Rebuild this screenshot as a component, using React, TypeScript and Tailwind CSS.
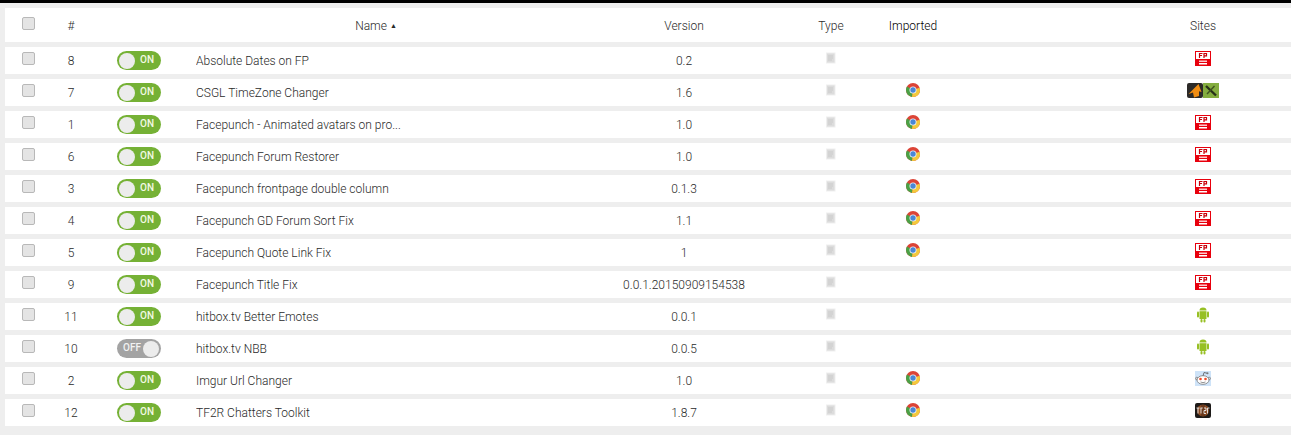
const gridCols = 'grid grid-cols-[46px_40px_105px_364px_248px_46px_118px_143px_176px] items-center';

type Site = 'fp' | 'csgl' | 'android' | 'reddit' | 'tf2r';

interface Script {
  id: number;
  enabled: boolean;
  name: string;
  version: string;
  imported: boolean;
  site: Site;
}

const scripts: Script[] = [
  { id: 8, enabled: true, name: 'Absolute Dates on FP', version: '0.2', imported: false, site: 'fp' },
  { id: 7, enabled: true, name: 'CSGL TimeZone Changer', version: '1.6', imported: true, site: 'csgl' },
  { id: 1, enabled: true, name: 'Facepunch - Animated avatars on pro...', version: '1.0', imported: true, site: 'fp' },
  { id: 6, enabled: true, name: 'Facepunch Forum Restorer', version: '1.0', imported: true, site: 'fp' },
  { id: 3, enabled: true, name: 'Facepunch frontpage double column', version: '0.1.3', imported: true, site: 'fp' },
  { id: 4, enabled: true, name: 'Facepunch GD Forum Sort Fix', version: '1.1', imported: true, site: 'fp' },
  { id: 5, enabled: true, name: 'Facepunch Quote Link Fix', version: '1', imported: true, site: 'fp' },
  { id: 9, enabled: true, name: 'Facepunch Title Fix', version: '0.0.1.20150909154538', imported: false, site: 'fp' },
  { id: 11, enabled: true, name: 'hitbox.tv Better Emotes', version: '0.0.1', imported: false, site: 'android' },
  { id: 10, enabled: false, name: 'hitbox.tv NBB', version: '0.0.5', imported: false, site: 'android' },
  { id: 2, enabled: true, name: 'Imgur Url Changer', version: '1.0', imported: true, site: 'reddit' },
  { id: 12, enabled: true, name: 'TF2R Chatters Toolkit', version: '1.8.7', imported: true, site: 'tf2r' },
];

function Checkbox() {
  return <div className="mx-auto -mt-[4px] h-[13px] w-[13px] rounded-[2px] border border-[#b8b8b8] bg-[#e4e4e4]" />;
}

function Toggle({ on }: { on: boolean }) {
  if (on) {
    return (
      <div className="ml-[26px] flex h-[19px] w-11 items-center justify-between rounded-full bg-[#75b135] pl-[2px] pr-[7px]">
        <div className="h-[16px] w-[16px] rounded-full bg-[#ececec]" />
        <span className="-mt-[1px] text-[10px] font-medium text-[#f4f9e6]">ON</span>
      </div>
    );
  }
  return (
    <div className="ml-[26px] flex h-[19px] w-11 items-center justify-between rounded-full bg-[#a3a3a3] pl-[6px] pr-[2px]">
      <span className="-mt-[1px] text-[10px] font-medium text-[#f2f2f2]">OFF</span>
      <div className="h-[16px] w-[16px] rounded-full bg-[#ececec]" />
    </div>
  );
}

function TypeIcon() {
  return (
    <svg width="12" height="13" viewBox="0 0 12 13" className="mx-auto -mt-[4px] block blur-[0.5px]">
      <rect x="1" y="0.500" width="9.500" height="11" fill="#efefef" />
      <rect x="2" y="1.500" width="7.500" height="9" fill="#dcdcdc" />
      <path d="M3 4h5M3 6h5M3 8h4" stroke="#cacaca" strokeWidth="1" />
    </svg>
  );
}

function ChromeIcon() {
  return (
    <svg width="14" height="14" viewBox="0 0 14 14" className="mx-auto -mt-[5px] block">
      <circle cx="7" cy="7" r="7" fill="#dc4437" />
      <path d="M7 7 1 3.400A7 7 0 0 0 6 13.900Z" fill="#4aa146" />
      <path d="M7 7 13.600 4.700A7 7 0 0 1 6 13.900Z" fill="#f4c93c" />
      <circle cx="7" cy="7" r="3.500" fill="#eef1f4" />
      <circle cx="7" cy="7" r="2.700" fill="#4a87d6" />
    </svg>
  );
}

function FpIcon() {
  return (
    <svg width="16" height="15" viewBox="0 0 16 15" className="block">
      <rect width="16" height="15" fill="#e8000d" />
      <rect x="1" y="1" width="14" height="7" fill="#fff" />
      <path d="M4.500 7V2.500h3M4.500 4.500h2.500M9 7V2.500h2.500v2.300H9" fill="none" stroke="#c8000a" strokeWidth="1.200" />
      <rect x="4" y="9.500" width="8" height="1.500" fill="#ffc9cc" />
      <rect x="4" y="12" width="8" height="1.500" fill="#fff" />
    </svg>
  );
}

function CsglIcon() {
  return (
    <div className="flex">
      <svg width="16" height="15" viewBox="0 0 16 15" className="block">
        <rect width="16" height="15" rx="2" fill="#2c2a28" />
        <path d="M11.500 1 14.500 9l-2.500-.8V13l-5 1.500-1-5L1.500 11Z" fill="#f18d12" />
      </svg>
      <svg width="16" height="15" viewBox="0 0 16 15" className="block">
        <rect width="16" height="15" fill="#84ad3f" />
        <path d="M3 3 13 12.500" stroke="#263018" strokeWidth="2.400" />
        <path d="M11.500 3 4 11" stroke="#3f5320" strokeWidth="1.400" />
      </svg>
    </div>
  );
}

function AndroidIcon() {
  return (
    <svg width="12" height="16" viewBox="0 0 12 16" className="block">
      <path d="M2.500 3.500a3.500 3 0 0 1 7 0Z" fill="#97c024" />
      <rect x="2.500" y="4.200" width="7" height="7.800" fill="#97c024" />
      <rect x="0" y="4.500" width="2" height="6" rx="1" fill="#97c024" />
      <rect x="10" y="4.500" width="2" height="6" rx="1" fill="#97c024" />
      <rect x="3.500" y="12" width="2" height="3.500" rx="1" fill="#97c024" />
      <rect x="6.500" y="12" width="2" height="3.500" rx="1" fill="#97c024" />
    </svg>
  );
}

function RedditIcon() {
  return (
    <svg width="16" height="15" viewBox="0 0 16 15" className="block">
      <rect width="16" height="15" fill="#cee3f8" />
      <path d="M8 5 9 1.500l3 .7" fill="none" stroke="#555" strokeWidth="0.800" />
      <circle cx="12.500" cy="2.200" r="1" fill="#777" />
      <circle cx="1.800" cy="7.500" r="1.300" fill="#ddd" stroke="#666" strokeWidth="0.600" />
      <circle cx="14.200" cy="7.500" r="1.300" fill="#ddd" stroke="#666" strokeWidth="0.600" />
      <ellipse cx="8" cy="9" rx="6" ry="4.300" fill="#fff" stroke="#666" strokeWidth="0.700" />
      <circle cx="5.500" cy="8" r="1.300" fill="#f04b2a" />
      <circle cx="10.500" cy="8" r="1.300" fill="#f04b2a" />
      <path d="M5.500 11q2.500 1.300 5 0" fill="none" stroke="#666" strokeWidth="0.700" />
    </svg>
  );
}

function Tf2rIcon() {
  return (
    <svg width="16" height="15" viewBox="0 0 16 15" className="block">
      <rect width="16" height="15" rx="2" fill="#1d1a18" />
      <ellipse cx="8" cy="7.500" rx="6" ry="6" fill="#8a4a22" />
      <path d="M7 2v11M9 2v11" stroke="#3a2013" strokeWidth="0.800" />
      <path d="M1.500 5h3M3 5v5.500M5.500 5h2.200M6 5v5.500M9 5h2v2.500H9v3h2M12.500 10.500V5h2" fill="none" stroke="#ececec" strokeWidth="0.900" />
    </svg>
  );
}

function SiteIcon({ site }: { site: Site }) {
  if (site === 'fp') return <FpIcon />;
  if (site === 'csgl') return <CsglIcon />;
  if (site === 'android') return <AndroidIcon />;
  if (site === 'reddit') return <RedditIcon />;
  return <Tf2rIcon />;
}

export default function App() {
  return (
    <div className="h-[435px] w-[1291px] overflow-hidden bg-[#eeeeee] pl-[5px] font-['Roboto',sans-serif] text-xs font-light text-[#2a2a2a]">
      <div className="-ml-[5px] mb-[5px] h-[3px] bg-black" />
      <div className={`${gridCols} mb-[5px] h-[34px] bg-white pt-[2px] text-center`}>
        <div className="-mt-[2px]">
          <Checkbox />
        </div>
        <div>#</div>
        <div />
        <div className="-ml-[4px]">
          Name <span className="relative -top-[2px] text-[7px]">▲</span>
        </div>
        <div>Version</div>
        <div>Type</div>
        <div className="text-black">Imported</div>
        <div />
        <div>Sites</div>
      </div>
      <div className="flex flex-col gap-[5px]">
        {scripts.map((script) => (
          <div key={script.id} className={`${gridCols} h-[27px] bg-white text-center`}>
            <Checkbox />
            <div className="pt-px">{script.id}</div>
            <Toggle on={script.enabled} />
            <div className="truncate pt-px text-left">{script.name}</div>
            <div className="pt-px">{script.version}</div>
            <TypeIcon />
            <div>{script.imported && <ChromeIcon />}</div>
            <div />
            <div className="-mt-[4px] flex justify-center">
              <SiteIcon site={script.site} />
            </div>
          </div>
        ))}
      </div>
    </div>
  );
}
